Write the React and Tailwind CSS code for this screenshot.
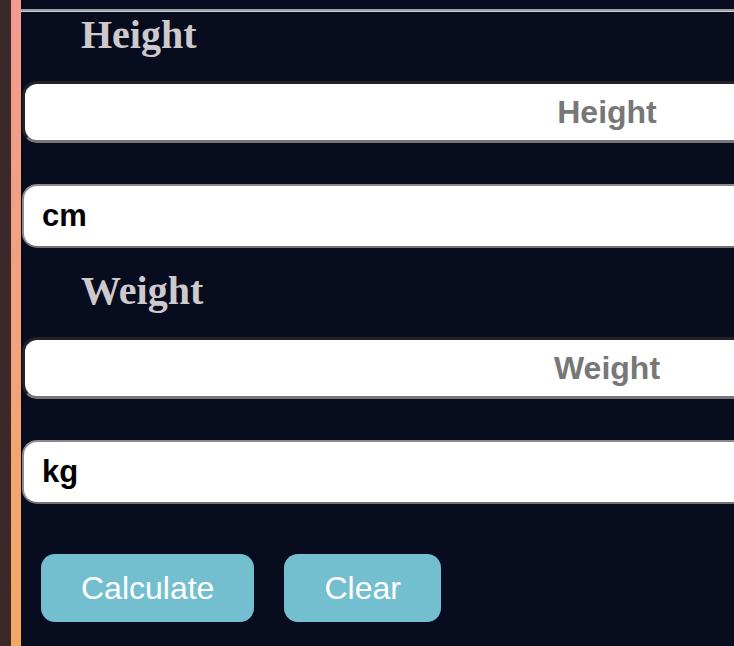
export default function App() {
  return (
    <div className="flex h-[646px] w-[734px] overflow-hidden bg-[#080c1f]">
      <div className="w-[11px] shrink-0 bg-[#3b2829]" />
      <div className="w-[10px] shrink-0 bg-gradient-to-b from-[#f29c90] to-[#f2a862]" />
      <div className="flex-1 min-w-0 overflow-hidden">
        <div className="mt-[9px] w-[1170px] border-t-2 border-b border-t-[#9c9ca4] border-b-[#d4d4da]" />
        <Field label="Height" unit="cm" />
        <Field label="Weight" unit="kg" labelTop="mt-[20px]" />
        <div className="flex gap-[30px] pl-[20px] pt-[50px]" style={{ fontFamily: '"Liberation Sans", Arial, sans-serif' }}>
          <button className="h-[68px] rounded-[14px] bg-[#74bfcf] px-[40px] text-[32px] text-white">Calculate</button>
          <button className="h-[68px] rounded-[14px] bg-[#74bfcf] px-[40px] text-[32px] text-white">Clear</button>
        </div>
      </div>
    </div>
  )
}

function Field({ label, unit, labelTop = '' }) {
  return (
    <div className={labelTop} style={{ fontFamily: '"Liberation Sans", Arial, sans-serif' }}>
      <div
        className="pl-[60px] text-[40px] font-bold leading-[46px] text-[#cdc9cc]"
        style={{ fontFamily: '"Liberation Serif", "Times New Roman", serif' }}
      >
        {label}
      </div>
      <input
        placeholder={label}
        className="mt-[23px] block h-[62px] w-[1170px] ml-px rounded-l-[15px] border-[3px] border-t-[#222226] border-l-[#222226] border-r-[#777] border-b-[#77777b] bg-white text-center text-[32px] font-bold text-black placeholder:text-[#777]"
      />
      <div className="mt-[41px] flex h-[64px] w-[1170px] ml-px items-center rounded-l-[15px] border-2 border-t-[#8a8a90] border-l-[#8a8a90] border-b-[#707076] bg-white pl-[18px] text-[31px] font-bold text-black">
        {unit}
      </div>
    </div>
  )
}
